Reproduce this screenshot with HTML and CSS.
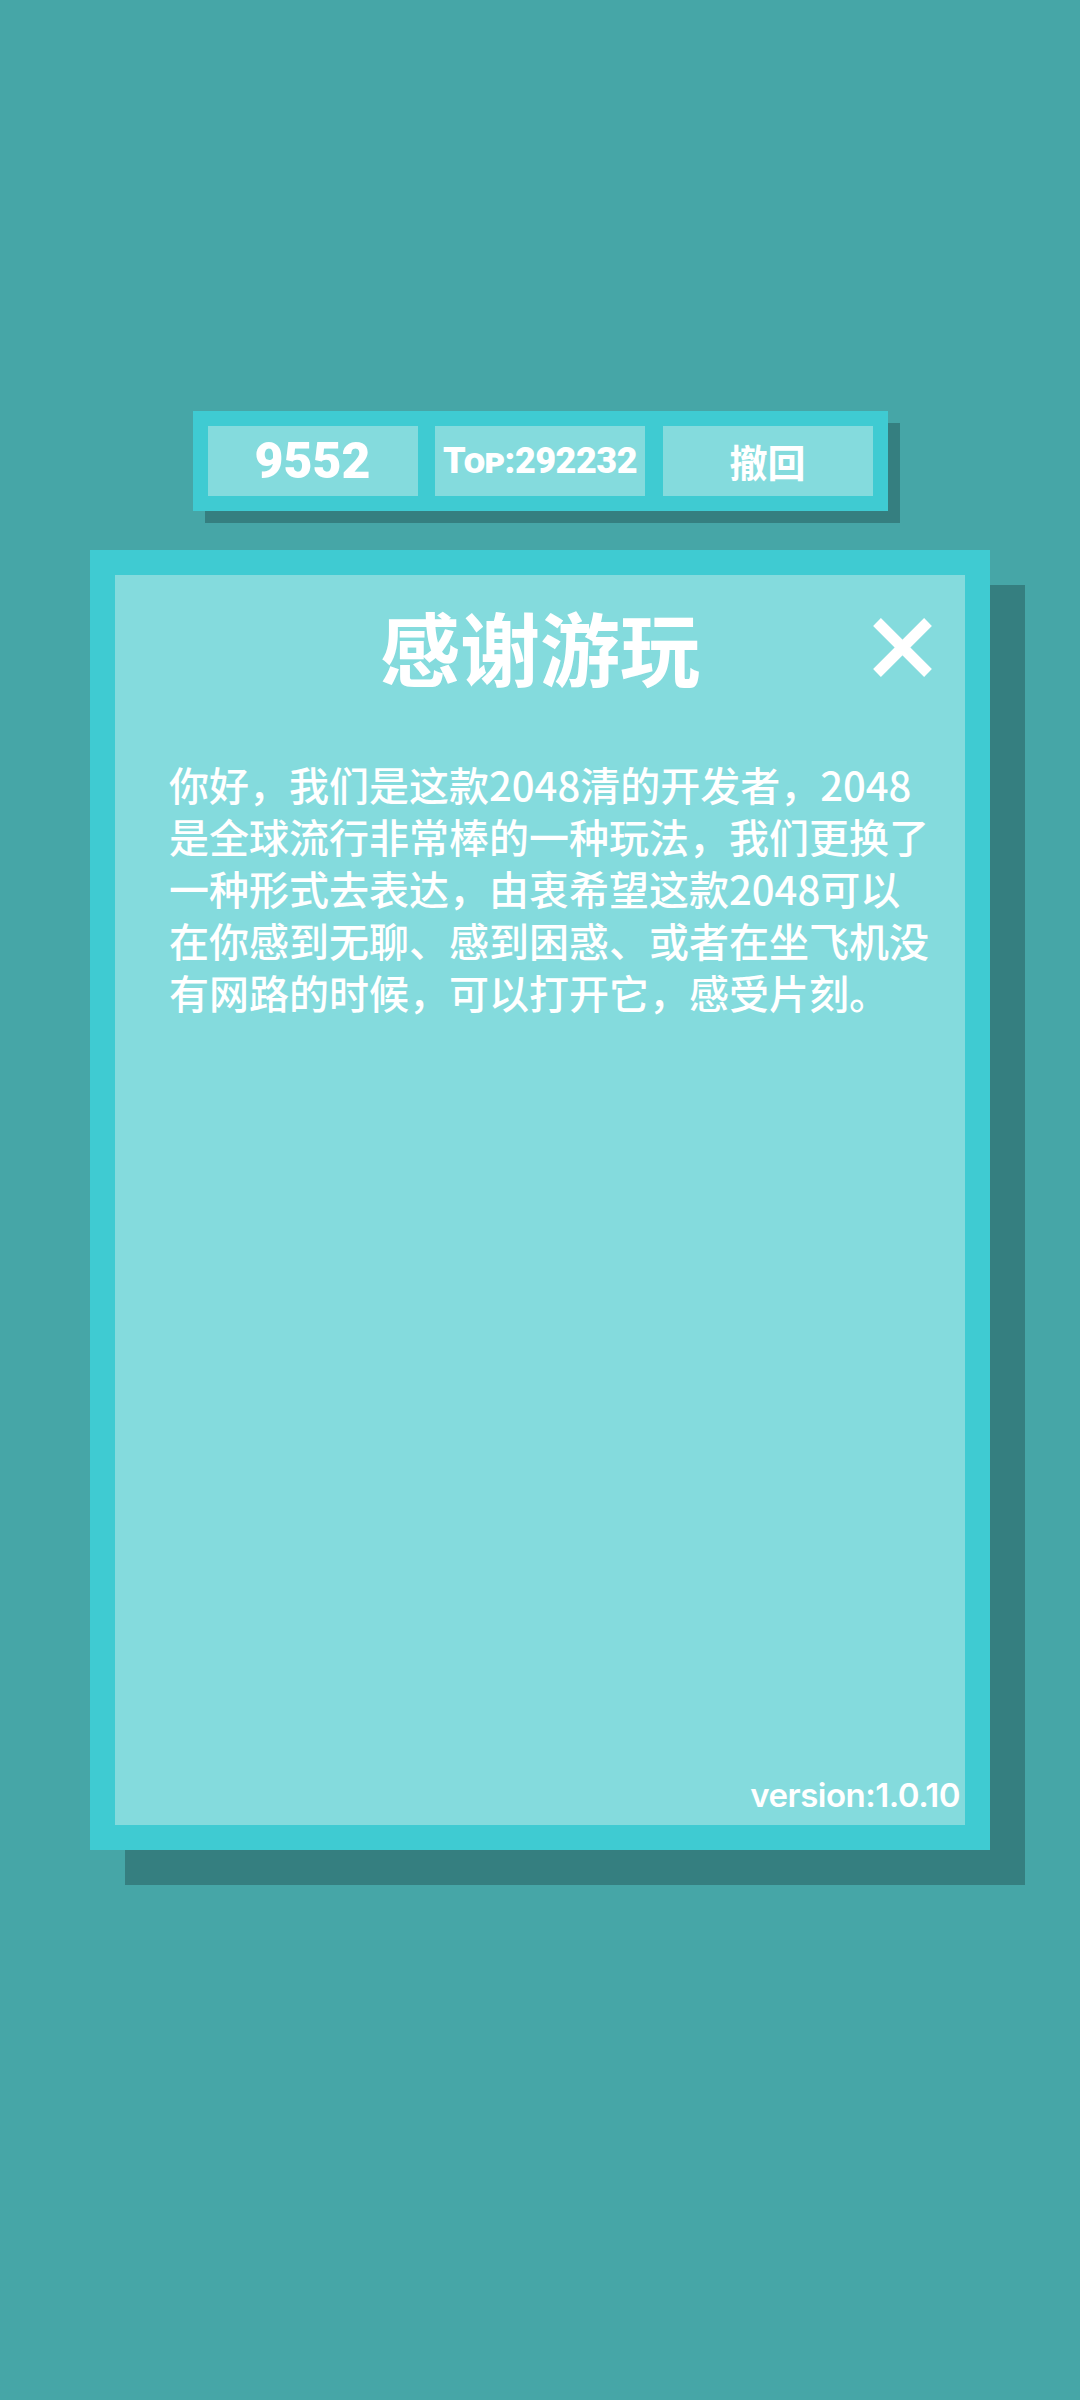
FILE: index.html
```html
<!DOCTYPE html>
<html>
<head>
  <meta charset="UTF-8">
  <title>2048清 - 感谢游玩</title>
  <link rel="stylesheet" href="styles.css">
</head>
<body>
  <div class="screen">
    <div class="score-bar">
      <div class="score-cell score">9552</div>
      <div class="score-cell top">Top:292232</div>
      <div class="score-cell undo">撤回</div>
    </div>

    <div class="dialog">
      <div class="dialog-inner">
        <div class="dialog-header">
          <h1>感谢游玩</h1>
          <button class="close-btn" aria-label="关闭">
            <svg viewBox="0 0 59 59" width="59" height="59">
              <line x1="4" y1="4" x2="55" y2="55" stroke="#fff" stroke-width="11"/>
              <line x1="55" y1="4" x2="4" y2="55" stroke="#fff" stroke-width="11"/>
            </svg>
          </button>
        </div>

        <p class="dialog-text">你好，我们是这款2048清的开发者，2048是全球流行非常棒的一种玩法，我们更换了一种形式去表达，由衷希望这款2048可以在你感到无聊、感到困惑、或者在坐飞机没有网路的时候，可以打开它，感受片刻。</p>

        <div class="version">version:1.0.10</div>
      </div>
    </div>
  </div>
</body>
</html>
```

FILE: styles.css
```css
:root {
  --bg-color: #46a6a7;
  --frame-color: #3fcbd2;
  --panel-color: #84dbdd;
  --shadow-color: #357f80;
  --text-color: #fff;
}

html, body {
  margin: 0;
  padding: 0;
}

body {
  background-color: var(--bg-color);
  color: var(--text-color);
  font-family: "Noto Sans CJK SC", "Noto Sans", sans-serif;
  min-height: 2400px;
}

.screen {
  display: flex;
  flex-direction: column;
  align-items: center;
  padding-top: 411px;
}

/* Top score bar */
.score-bar {
  width: 695px;
  box-sizing: border-box;
  padding: 15px;
  background-color: var(--frame-color);
  box-shadow: 12px 12px 0 var(--shadow-color);
  display: grid;
  grid-template-columns: repeat(3, 210px);
  justify-content: space-between;
}

.score-cell {
  height: 70px;
  background-color: var(--panel-color);
  display: flex;
  align-items: center;
  justify-content: center;
  font-family: Roboto, "Noto Sans CJK SC", sans-serif;
  font-weight: 900;
  line-height: 1;
}

.score {
  font-size: 50px;
}

.top {
  font-size: 36px;
  font-variant: small-caps;
  letter-spacing: -0.5px;
}

.undo {
  font-family: "Noto Sans CJK SC", sans-serif;
  font-weight: 700;
  font-size: 38px;
}

/* Dialog */
.dialog {
  margin-top: 39px;
  width: 900px;
  height: 1300px;
  box-sizing: border-box;
  padding: 25px;
  background-color: var(--frame-color);
  box-shadow: 35px 35px 0 var(--shadow-color);
}

.dialog-inner {
  height: 100%;
  background-color: var(--panel-color);
  display: flex;
  flex-direction: column;
}

.dialog-header {
  position: relative;
  padding-top: 22px;
}

.dialog-header h1 {
  margin: 0;
  text-align: center;
  font-size: 80px;
  line-height: 96px;
  font-weight: 700;
}

.close-btn {
  position: absolute;
  top: 43px;
  right: 33px;
  padding: 0;
  border: 0;
  background: none;
  width: 59px;
  height: 59px;
}

.close-btn svg {
  display: block;
}

.dialog-text {
  margin: 65px 0 0 54px;
  width: 764px;
  font-size: 40px;
  line-height: 52px;
  font-weight: 500;
}

.version {
  margin-top: auto;
  padding: 0 5px 10px 0;
  text-align: right;
  font-family: Inter, Roboto, sans-serif;
  font-weight: 600;
  font-size: 33px;
  line-height: 40px;
  letter-spacing: -0.5px;
}
```
